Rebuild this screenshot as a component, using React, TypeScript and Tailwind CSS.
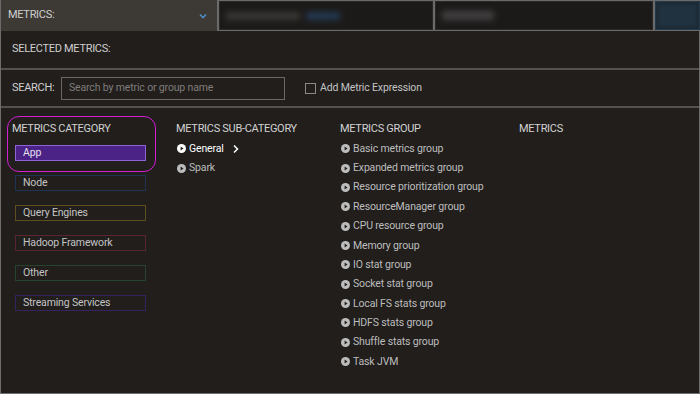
import React from "react";

const PlayIcon = ({ color = "#bdbdbd" }: { color?: string }) => (
  <svg width="9" height="9" viewBox="0 0 10 10" className="shrink-0">
    <circle cx="5" cy="5" r="5" fill={color} />
    <path d="M4 2.8 L7.2 5 L4 7.2 Z" fill="#211e1c" />
  </svg>
);

const categories = [
  { name: "App", cls: "border-[#8e63d6] bg-[#4b2285] text-[#e6e0f0]" },
  { name: "Node", cls: "border-[#1d3552] text-[#c4c4c4]" },
  { name: "Query Engines", cls: "border-[#5c4f1d] text-[#c4c4c4]" },
  { name: "Hadoop Framework", cls: "border-[#5a2533] text-[#c4c4c4]" },
  { name: "Other", cls: "border-[#264330] text-[#c4c4c4]" },
  { name: "Streaming Services", cls: "border-[#36225e] text-[#c4c4c4]" },
];

const groups = [
  "Basic metrics group",
  "Expanded metrics group",
  "Resource prioritization group",
  "ResourceManager group",
  "CPU resource group",
  "Memory group",
  "IO stat group",
  "Socket stat group",
  "Local FS stats group",
  "HDFS stats group",
  "Shuffle stats group",
  "Task JVM",
];

export default function App() {
  return (
    <div
      className="w-[700px] h-[394px] bg-[#211e1c] overflow-hidden flex flex-col text-[#c4c4c4] text-[10.5px] tracking-[-0.15px] relative"
      style={{ fontFamily: "Roboto, 'Liberation Sans', sans-serif" }}
    >
      {/* top bar */}
      <div className="h-[31px] flex bg-[#6a6a6a] shrink-0">
        <div className="w-[217px] bg-[#3d3a35] flex items-center justify-between pl-[7px] pr-[10px] border-l border-[#6a6a6a]">
          <span className="text-[11px] text-[#cfcfcf] tracking-[-0.3px]">METRICS:</span>
          <svg width="8" height="6" viewBox="0 0 8 6">
            <path d="M1 1.5 L4 4.5 L7 1.5" stroke="#4d8cc4" strokeWidth="1.6" fill="none" />
          </svg>
        </div>
        <div className="w-[2px]" />
        <div className="w-[214px] bg-[#1c1a19] my-[1px] border border-[#2a2826] overflow-hidden flex items-center px-[6px] gap-[6px]">
          <div className="h-[8px] w-[74px] bg-[#3a3836] blur-[3px]" />
          <div className="h-[8px] w-[34px] bg-[#243a52] blur-[3px]" />
        </div>
        <div className="w-[2px]" />
        <div className="w-[218px] bg-[#1c1a19] my-[1px] border border-[#2a2826] overflow-hidden flex items-center px-[6px]">
          <div className="h-[9px] w-[52px] bg-[#424040] blur-[3px]" />
        </div>
        <div className="w-[2px]" />
        <div className="flex-1 bg-[#1c2b36] my-[1px] border border-[#24394a] p-[3px]">
          <div className="h-full w-full bg-[#203240] blur-[1px]" />
        </div>
      </div>

      {/* main panel */}
      <div className="flex-1 flex flex-col border-l border-r border-b border-[#6e6e6e]">
        <div className="h-[39px] flex items-center pl-[11px] border-b-2 border-[#545250] shrink-0">
          <span className="text-[11px] text-[#cfcfcf] tracking-[-0.3px]">SELECTED METRICS:</span>
        </div>
        <div className="h-[38px] flex items-center pl-[11px] border-b-2 border-[#545250] shrink-0">
          <span className="text-[11px] text-[#cfcfcf] tracking-[-0.3px] w-[49px]">SEARCH:</span>
          <div className="w-[224px] h-[23px] border border-[#6a6867] flex items-center pl-[7px]">
            <span className="text-[#7f7d7b]">Search by metric or group name</span>
          </div>
          <div className="ml-[20px] w-[11px] h-[11px] border border-[#8a8a8a]" />
          <span className="ml-[4px] text-[#c4c4c4]">Add Metric Expression</span>
        </div>

        <div className="flex-1 flex pt-[14px] pl-[11px] relative">
          {/* category */}
          <div className="w-[164px] flex flex-col">
            <div className="h-[13px] leading-[13px] text-[11px] text-[#d2d2d2] tracking-[-0.3px]">METRICS CATEGORY</div>
            <div className="flex flex-col gap-[14px] mt-[10px] pl-[3px]">
              {categories.map((c) => (
                <div
                  key={c.name}
                  className={`w-[131px] h-[16px] border flex items-center pl-[7px] leading-none ${c.cls}`}
                >
                  {c.name}
                </div>
              ))}
            </div>
          </div>
          {/* sub-category */}
          <div className="w-[164px] flex flex-col">
            <div className="h-[13px] leading-[13px] text-[11px] text-[#d2d2d2] tracking-[-0.3px]">METRICS SUB-CATEGORY</div>
            <div className="flex flex-col mt-[4px] pl-[1px]">
              <div className="h-[19.4px] flex items-center gap-[3px] text-white">
                <PlayIcon color="#ffffff" />
                <span>General</span>
                <svg width="8" height="10" viewBox="0 0 8 10" className="ml-[5px]">
                  <path d="M2 1.5 L5.5 5 L2 8.5" stroke="#ffffff" strokeWidth="1.5" fill="none" />
                </svg>
              </div>
              <div className="h-[19.4px] flex items-center gap-[3px] text-[#bdbdbd]">
                <PlayIcon />
                <span>Spark</span>
              </div>
            </div>
          </div>
          {/* group */}
          <div className="w-[179px] flex flex-col">
            <div className="h-[13px] leading-[13px] text-[11px] text-[#d2d2d2] tracking-[-0.3px]">METRICS GROUP</div>
            <div className="flex flex-col mt-[4px] pl-[1px]">
              {groups.map((g) => (
                <div key={g} className="h-[19.35px] flex items-center gap-[3px] text-[#bdbdbd]">
                  <PlayIcon />
                  <span>{g}</span>
                </div>
              ))}
            </div>
          </div>
          {/* metrics */}
          <div className="flex-1 flex flex-col">
            <div className="h-[13px] leading-[13px] text-[11px] text-[#d2d2d2] tracking-[-0.3px]">METRICS</div>
          </div>

          {/* highlight annotation */}
          <div className="absolute left-[6px] top-[8px] w-[149px] h-[56px] border-[1.5px] border-[#d21fd4] rounded-[12px] pointer-events-none" />
        </div>
      </div>
    </div>
  );
}
